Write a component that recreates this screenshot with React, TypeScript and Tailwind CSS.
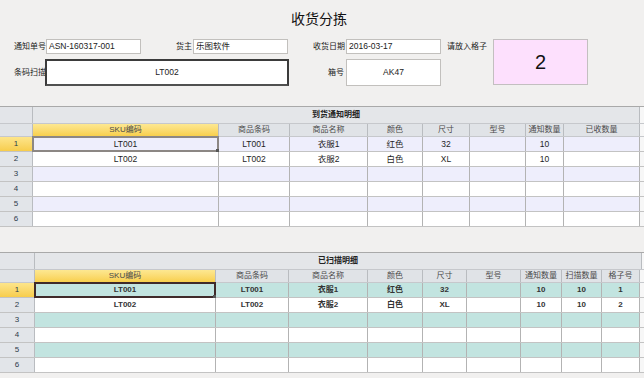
import React from 'react';

type Col = { w: string; label: string };

const grid1Cols: Col[] = [
  { w: 'w-[33px]', label: '' },
  { w: 'w-[186px]', label: 'SKU编码' },
  { w: 'w-[71px]', label: '商品条码' },
  { w: 'w-[78px]', label: '商品名称' },
  { w: 'w-[55px]', label: '颜色' },
  { w: 'w-[47px]', label: '尺寸' },
  { w: 'w-[56px]', label: '型号' },
  { w: 'w-[38px]', label: '通知数量' },
  { w: 'w-[76px]', label: '已收数量' },
];

const grid2Cols: Col[] = [
  { w: 'w-[35px]', label: '' },
  { w: 'w-[181px]', label: 'SKU编码' },
  { w: 'w-[73px]', label: '商品条码' },
  { w: 'w-[79px]', label: '商品名称' },
  { w: 'w-[55px]', label: '颜色' },
  { w: 'w-[44px]', label: '尺寸' },
  { w: 'w-[54px]', label: '型号' },
  { w: 'w-[41px]', label: '通知数量' },
  { w: 'w-[40px]', label: '扫描数量' },
  { w: 'w-[38px]', label: '格子号' },
];

const grid1Rows = [
  ['LT001', 'LT001', '衣服1', '红色', '32', '', '10', ''],
  ['LT002', 'LT002', '衣服2', '白色', 'XL', '', '10', ''],
  ['', '', '', '', '', '', '', ''],
  ['', '', '', '', '', '', '', ''],
  ['', '', '', '', '', '', '', ''],
  ['', '', '', '', '', '', '', ''],
];

const grid2Rows = [
  ['LT001', 'LT001', '衣服1', '红色', '32', '', '10', '10', '1'],
  ['LT002', 'LT002', '衣服2', '白色', 'XL', '', '10', '10', '2'],
  ['', '', '', '', '', '', '', '', ''],
  ['', '', '', '', '', '', '', '', ''],
  ['', '', '', '', '', '', '', '', ''],
  ['', '', '', '', '', '', '', '', ''],
];

interface DataGridProps {
  title: string;
  cols: Col[];
  rows: string[][];
  stripe: string;
  selBorder: string;
  bold?: boolean;
}

const DataGrid: React.FC<DataGridProps> = ({ title, cols, rows, stripe, selBorder, bold }) => {
  const rowHead = cols[0];
  return (
    <div className="w-[644px] border-t border-[#a9a9a9] bg-[#f7f7f7]">
      {/* group title */}
      <div className="flex h-[17px] border-b border-[#c6c8cc]">
        <div className={`${rowHead.w} shrink-0 border-r border-[#b9bcc0] bg-[#e3e5e9]`} />
        <div className="w-[607px] shrink-0 flex items-center justify-center border-r border-[#b9bcc0] bg-[#e4e6e9] text-[8px] font-bold text-[#222]">
          {title}
        </div>
      </div>
      {/* column headers */}
      <div className="flex h-[13px] border-b border-[#c6c8cc]">
        {cols.map((c, i) => (
          <div
            key={i}
            className={`${c.w} shrink-0 whitespace-nowrap border-r border-[#b9bcc0] flex items-center justify-center text-[8px] text-[#4a4a4a] ${
              i === 1 ? 'bg-gradient-to-b from-[#fde891] to-[#f8cf4b]' : 'bg-[#e0e3e7]'
            }`}
          >
            {c.label}
          </div>
        ))}
      </div>
      {rows.map((r, ri) => (
        <div key={ri} className="flex h-[15px] border-b border-[#c3c3c3]">
          <div
            className={`${rowHead.w} shrink-0 border-r border-[#b9bcc0] flex items-center justify-center text-[8px] text-[#2d3b4a] ${
              ri === 0 ? 'bg-gradient-to-b from-[#fde58a] to-[#f7cd4b]' : 'bg-[#e2e5e9]'
            }`}
          >
            {ri + 1}
          </div>
          {r.map((v, ci) => (
            <div
              key={ci}
              className={`${cols[ci + 1].w} shrink-0 relative border-r border-[#b3b3b3] flex items-center justify-center ${
                bold ? 'font-bold text-[8px] text-[#333]' : 'text-[8.5px] text-[#1e1e1e]'
              } ${ri % 2 === 0 ? stripe : 'bg-white'}`}
            >
              {v}
              {ri === 0 && ci === 0 && (
                <div className={`absolute -left-[1px] -top-[1px] -right-[1px] -bottom-[1px] border-2 ${selBorder}`}>
                  <div className="absolute -right-[2px] -bottom-[2px] w-[3px] h-[3px] bg-[#555]" />
                </div>
              )}
            </div>
          ))}
        </div>
      ))}
    </div>
  );
};

const Field: React.FC<{ w: string; h?: string; center?: boolean; text: string; thick?: boolean }> = ({
  w,
  h = 'h-[15px]',
  center,
  text,
  thick,
}) => (
  <div
    className={`${w} ${h} shrink-0 bg-white flex items-center text-[8.5px] text-[#222] ${
      center ? 'justify-center' : 'pl-[2px]'
    } ${thick ? 'border-2 border-[#3b3b3b] border-b-[#505050]' : 'border border-[#c2c0bd]'}`}
  >
    {text}
  </div>
);

export default function App() {
  return (
    <div className="w-[644px] h-[378px] overflow-hidden bg-[#f1f0ef] font-['Liberation_Sans','Noto_Sans_CJK_SC',sans-serif]">
      <div className="h-[106px]">
        <div className="h-[39px] pt-[9px] pr-[6px] text-center text-[14px] leading-[20px] text-[#111]">收货分拣</div>
        <div className="flex pl-[14px] text-[8px] text-[#222] whitespace-nowrap">
          {/* left block */}
          <div className="flex flex-col gap-[5px]">
            <div className="flex items-center h-[15px]">
              <div className="w-[32px] shrink-0">通知单号</div>
              <Field w="w-[95px]" text="ASN-160317-001" />
              <div className="w-[52px] shrink-0 text-right pr-[1px]">货主</div>
              <Field w="w-[95px]" text="乐图软件" />
            </div>
            <div className="flex items-center h-[27px]">
              <div className="w-[31px] shrink-0 overflow-visible">条码扫描</div>
              <Field w="w-[244px]" h="h-[27px]" center thick text="LT002" />
            </div>
          </div>
          {/* middle block */}
          <div className="flex flex-col gap-[5px]">
            <div className="flex items-center h-[15px]">
              <div className="w-[57px] shrink-0 text-right pr-[1px]">收货日期</div>
              <Field w="w-[95px]" text="2016-03-17" />
            </div>
            <div className="flex items-center h-[27px]">
              <div className="w-[57px] shrink-0 text-right pr-[2px]">箱号</div>
              <Field w="w-[95px]" h="h-[27px]" center text="AK47" />
            </div>
          </div>
          <div className="w-[52px] shrink-0 h-[15px] flex items-center justify-center">请放入格子</div>
          <div className="w-[95px] h-[46px] shrink-0 bg-[#fde0fd] border border-[#c3bfc0] flex items-center justify-center text-[20px] text-[#111]">
            2
          </div>
        </div>
      </div>
      <DataGrid
        title="到货通知明细"
        cols={grid1Cols}
        rows={grid1Rows}
        stripe="bg-[#eeeefc]"
        selBorder="border-[#8c8784]"
      />
      <div className="h-[25px]" />
      <DataGrid
        title="已扫描明细"
        cols={grid2Cols}
        rows={grid2Rows}
        stripe="bg-[#c2e4e0]"
        selBorder="border-[#3f2a2a]"
        bold
      />
    </div>
  );
}
